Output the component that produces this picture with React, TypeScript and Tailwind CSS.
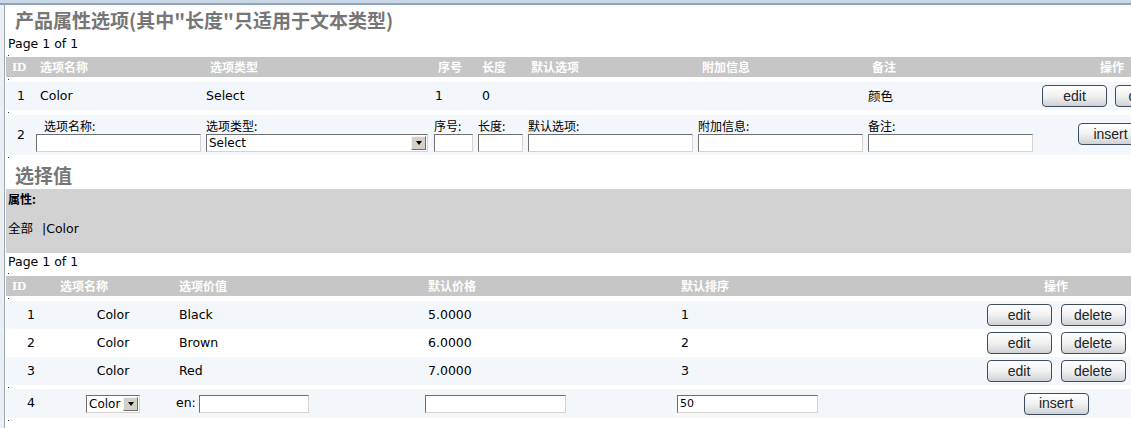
import React from "react";

const F = "font-['DejaVu_Sans','Noto_Sans_CJK_SC',sans-serif]";
const T1 = "grid grid-cols-[30px_170px_228px_44px_50px_170px_170px_170px_148px]";
const T2 = "grid grid-cols-[50px_119px_249px_253px_304px_150px]";

function Dot() {
  return (
    <div className="h-full pl-[2px] flex items-center">
      <div className="w-[1px] h-[1px] bg-[#333]" />
    </div>
  );
}

function Spacer({ h }: { h: string }) {
  return (
    <div className={h}>
      <Dot />
    </div>
  );
}

function Input({ w, value }: { w: string; value?: string }) {
  return (
    <div
      className={`${w} h-[18px] bg-white border border-t-[#6e6e6e] border-l-[#6e6e6e] border-r-[#d8d4cc] border-b-[#d8d4cc] text-[11px] leading-[16px] pl-[2px] text-black`}
    >
      {value}
    </div>
  );
}

function Select({ w, value }: { w: string; value: string }) {
  return (
    <div
      className={`${w} h-[18px] bg-white border border-t-[#6e6e6e] border-l-[#6e6e6e] border-r-[#d8d4cc] border-b-[#d8d4cc] flex items-center justify-between`}
    >
      <span className="text-[12px] leading-[16px] pl-[2px] text-black">{value}</span>
      <div className="w-[15px] h-[14px] mr-[1px] bg-[#d4d0c8] border border-t-[#f4f4f4] border-l-[#f4f4f4] border-r-[#6e6e6e] border-b-[#6e6e6e] flex items-center justify-center">
        <div className="w-0 h-0 border-l-[3px] border-r-[3px] border-t-[4px] border-l-transparent border-r-transparent border-t-black" />
      </div>
    </div>
  );
}

function Btn({ label }: { label: string }) {
  return (
    <div className="w-[65px] h-[22px] shrink-0 rounded-[4px] border border-[#3e4d5e] bg-linear-to-b from-[#ffffff] via-[#f1f1f1] to-[#cfd2d6] flex items-center justify-center font-['Liberation_Sans',Arial,sans-serif] text-[14px] text-[#222]">
      {label}
    </div>
  );
}

function Title({ children }: { children: React.ReactNode }) {
  return (
    <div className="pl-[9px] text-[19px] font-bold text-[#767676] font-['Noto_Sans_CJK_SC',sans-serif] leading-[28px] h-[28px]">
      {children}
    </div>
  );
}

export default function App() {
  const rows2 = [
    { id: "1", v: "Black", p: "5.0000", s: "1", bg: "bg-[#f3f6fb]" },
    { id: "2", v: "Brown", p: "6.0000", s: "2", bg: "bg-white" },
    { id: "3", v: "Red", p: "7.0000", s: "3", bg: "bg-[#f3f6fb]" },
  ];
  return (
    <div className={`w-full h-[428px] overflow-hidden bg-white text-black ${F} text-[12px]`}>
      <div className="h-[5px] bg-[#c9d7e6] border-b-2 border-[#8ea4bc]" />
      <div className="flex">
        <div className="w-[5px] h-[423px] shrink-0 bg-[#eceef2] border-r border-[#9aa9ba]" />
        <div className="w-[1190px] shrink-0 pl-[1px]">
          <div className="h-[1px]" />
          <Title>产品属性选项(其中"长度"只适用于文本类型)</Title>
          <div className="h-[19px] leading-[19px] pl-[2px] text-[12.5px]">Page 1 of 1</div>
          <Spacer h="h-[4px]" />
          {/* header 1 */}
          <div className={`${T1} h-[20px] bg-[#c6c6c6] text-white font-bold items-center`}>
            <div className="pl-[6px] font-['Liberation_Serif',serif] text-[13px]">ID</div>
            <div className="pl-[4px] font-['Noto_Sans_CJK_SC',sans-serif]">选项名称</div>
            <div className="pl-[4px] font-['Noto_Sans_CJK_SC',sans-serif]">选项类型</div>
            <div className="pl-[4px] font-['Noto_Sans_CJK_SC',sans-serif]">序号</div>
            <div className="pl-[4px] font-['Noto_Sans_CJK_SC',sans-serif]">长度</div>
            <div className="pl-[3px] font-['Noto_Sans_CJK_SC',sans-serif]">默认选项</div>
            <div className="pl-[4px] font-['Noto_Sans_CJK_SC',sans-serif]">附加信息</div>
            <div className="pl-[4px] font-['Noto_Sans_CJK_SC',sans-serif]">备注</div>
            <div className="text-center font-['Noto_Sans_CJK_SC',sans-serif]">操作</div>
          </div>
          <Spacer h="h-[5px]" />
          {/* row 1 */}
          <div className={`${T1} h-[28px] bg-[#f3f6fb] items-center text-[12.5px]`}>
            <div className="pl-[11px]">1</div>
            <div className="pl-[4px]">Color</div>
            <div>Select</div>
            <div className="pl-[1px]">1</div>
            <div className="pl-[4px]">0</div>
            <div />
            <div />
            <div className="font-['Noto_Sans_CJK_SC',sans-serif]">颜色</div>
            <div className="flex gap-[8px] pl-[4px]">
              <Btn label="edit" />
              <Btn label="delete" />
            </div>
          </div>
          <Spacer h="h-[5px]" />
          {/* row 2 */}
          <div className={`${T1} h-[40px] bg-[#f3f6fb] text-[12px]`}>
            <div className="pl-[11px] flex items-center text-[12.5px]">2</div>
            <div className="pt-[3px]">
              <div className="h-[16px] leading-[16px] pl-[8px] font-['Noto_Sans_CJK_SC',sans-serif]">选项名称:</div>
              <Input w="w-[165px]" />
            </div>
            <div className="pt-[3px]">
              <div className="h-[16px] leading-[16px] font-['Noto_Sans_CJK_SC',sans-serif]">选项类型:</div>
              <Select w="w-[222px]" value="Select" />
            </div>
            <div className="pt-[3px]">
              <div className="h-[16px] leading-[16px] font-['Noto_Sans_CJK_SC',sans-serif]">序号:</div>
              <Input w="w-[39px]" />
            </div>
            <div className="pt-[3px]">
              <div className="h-[16px] leading-[16px] font-['Noto_Sans_CJK_SC',sans-serif]">长度:</div>
              <Input w="w-[45px]" />
            </div>
            <div className="pt-[3px]">
              <div className="h-[16px] leading-[16px] font-['Noto_Sans_CJK_SC',sans-serif]">默认选项:</div>
              <Input w="w-[165px]" />
            </div>
            <div className="pt-[3px]">
              <div className="h-[16px] leading-[16px] font-['Noto_Sans_CJK_SC',sans-serif]">附加信息:</div>
              <Input w="w-[165px]" />
            </div>
            <div className="pt-[3px]">
              <div className="h-[16px] leading-[16px] font-['Noto_Sans_CJK_SC',sans-serif]">备注:</div>
              <Input w="w-[165px]" />
            </div>
            <div className="flex items-start pt-[8px] pl-[40px]">
              <Btn label="insert" />
            </div>
          </div>
          <Spacer h="h-[5px]" />
          <div className="h-[29px] pt-[1px]">
            <Title>选择值</Title>
          </div>
          {/* gray box */}
          <div className="h-[64px] bg-[#d2d2d2] pl-[2px] flex flex-col">
            <div className="h-[18px] pt-[2px] leading-[16px] font-bold font-['Noto_Sans_CJK_SC',sans-serif]">属性:</div>
            <div className="h-[30px] pt-[12px] leading-[18px] text-[12.5px]">
              <span className="font-['Noto_Sans_CJK_SC',sans-serif]">全部</span>
              <span className="pl-[9px]">|Color</span>
            </div>
          </div>
          <div className="h-[18px] leading-[18px] pl-[2px] text-[12.5px]">Page 1 of 1</div>
          <Spacer h="h-[5px]" />
          {/* header 2 */}
          <div className={`${T2} h-[20px] bg-[#c6c6c6] text-white font-bold items-center`}>
            <div className="pl-[6px] font-['Liberation_Serif',serif] text-[13px]">ID</div>
            <div className="pl-[4px] font-['Noto_Sans_CJK_SC',sans-serif]">选项名称</div>
            <div className="pl-[4px] font-['Noto_Sans_CJK_SC',sans-serif]">选项价值</div>
            <div className="pl-[4px] font-['Noto_Sans_CJK_SC',sans-serif]">默认价格</div>
            <div className="pl-[4px] font-['Noto_Sans_CJK_SC',sans-serif]">默认排序</div>
            <div className="text-center font-['Noto_Sans_CJK_SC',sans-serif]">操作</div>
          </div>
          <Spacer h="h-[5px]" />
          {rows2.map((r) => (
            <div key={r.id} className={`${T2} h-[28px] ${r.bg} items-center text-[12.5px]`}>
              <div className="text-center">{r.id}</div>
              <div className="text-center pr-[5px]">Color</div>
              <div className="pl-[4px]">{r.v}</div>
              <div className="pl-[4px]">{r.p}</div>
              <div className="pl-[4px]">{r.s}</div>
              <div className="flex justify-center gap-[9px]">
                <Btn label="edit" />
                <Btn label="delete" />
              </div>
            </div>
          ))}
          <Spacer h="h-[4px]" />
          {/* row 4 */}
          <div className={`${T2} h-[29px] bg-[#f3f6fb] items-center text-[12.5px]`}>
            <div className="text-center">4</div>
            <div className="flex justify-center pr-[5px]">
              <Select w="w-[54px]" value="Color" />
            </div>
            <div className="flex items-center pl-[1px] gap-[3px]">
              <span>en:</span>
              <Input w="w-[110px]" />
            </div>
            <div className="pl-[1px]">
              <Input w="w-[141px]" />
            </div>
            <div>
              <Input w="w-[141px]" value="50" />
            </div>
            <div className="flex justify-center">
              <Btn label="insert" />
            </div>
          </div>
          <Spacer h="h-[5px]" />
        </div>
      </div>
    </div>
  );
}
